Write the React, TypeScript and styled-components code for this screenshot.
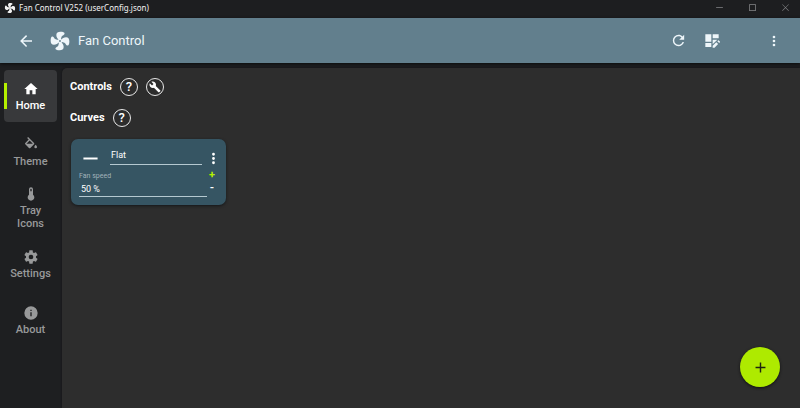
import React from "react";
import styled, { createGlobalStyle } from "styled-components";

const GlobalStyle = createGlobalStyle`
  * { box-sizing: border-box; }
  html, body { margin: 0; height: 100%; }
  #root { height: 100%; }
  body {
    background: #1e1f21;
    color: #fff;
    font-family: Roboto, "Liberation Sans", sans-serif;
    overflow: hidden;
  }
  button, input { font: inherit; color: inherit; }
`;

const paths = {
  home: "M10,20V14H14V20H19V12H22L12,3L2,12H5V20H10Z",
  fill: "M19,11.5C19,11.5 17,13.67 17,15A2,2 0 0,0 19,17A2,2 0 0,0 21,15C21,13.67 19,11.5 19,11.5M5.21,10L10,5.21L14.79,10M16.56,8.94L7.62,0L6.21,1.41L8.59,3.79L3.44,8.94C2.85,9.5 2.85,10.47 3.44,11.06L8.94,16.56C9.23,16.85 9.62,17 10,17C10.38,17 10.77,16.85 11.06,16.56L16.56,11.06C17.15,10.47 17.15,9.5 16.56,8.94Z",
  thermometer: "M15 13V5A3 3 0 0 0 9 5V13A5 5 0 1 0 15 13M12 4A1 1 0 0 1 13 5V8H11V5A1 1 0 0 1 12 4Z",
  cog: "M12,15.5A3.5,3.5 0 0,1 8.5,12A3.5,3.5 0 0,1 12,8.5A3.5,3.5 0 0,1 15.5,12A3.5,3.5 0 0,1 12,15.5M19.43,12.97C19.47,12.65 19.5,12.33 19.5,12C19.5,11.67 19.47,11.34 19.43,11L21.54,9.37C21.73,9.22 21.78,8.95 21.66,8.73L19.66,5.27C19.54,5.05 19.27,4.96 19.05,5.05L16.56,6.05C16.04,5.66 15.5,5.32 14.87,5.07L14.5,2.42C14.46,2.18 14.25,2 14,2H10C9.75,2 9.54,2.18 9.5,2.42L9.13,5.07C8.5,5.32 7.96,5.66 7.44,6.05L4.95,5.05C4.73,4.96 4.46,5.05 4.34,5.27L2.34,8.73C2.21,8.95 2.27,9.22 2.46,9.37L4.57,11C4.53,11.34 4.5,11.67 4.5,12C4.5,12.33 4.53,12.65 4.57,12.97L2.46,14.63C2.27,14.78 2.21,15.05 2.34,15.27L4.34,18.73C4.46,18.95 4.73,19.03 4.95,18.95L7.44,17.94C7.96,18.34 8.5,18.68 9.13,18.93L9.5,21.58C9.54,21.82 9.75,22 10,22H14C14.25,22 14.46,21.82 14.5,21.58L14.87,18.93C15.5,18.67 16.04,18.34 16.56,17.94L19.05,18.95C19.27,19.03 19.54,18.95 19.66,18.73L21.66,15.27C21.78,15.05 21.73,14.78 21.54,14.63L19.43,12.97Z",
  info: "M13,9H11V7H13M13,17H11V11H13M12,2A10,10 0 0,0 2,12A10,10 0 0,0 12,22A10,10 0 0,0 22,12A10,10 0 0,0 12,2Z",
  back: "M20,11V13H8L13.5,18.5L12.08,19.92L4.16,12L12.08,4.08L13.5,5.5L8,11H20Z",
  refresh: "M17.65,6.35C16.2,4.9 14.21,4 12,4A8,8 0 0,0 4,12A8,8 0 0,0 12,20C15.73,20 18.84,17.45 19.73,14H17.65C16.83,16.33 14.61,18 12,18A6,6 0 0,1 6,12A6,6 0 0,1 12,6C13.66,6 15.14,6.69 16.22,7.78L13,11H20V4L17.65,6.35Z",
  dashboardEdit: "M2,2H11V13H2ZM13,2H22V8H13ZM2,15H11V21H2ZM13,10H20L13,17ZM13,19.2V22H15.8L21.2,16.6L18.4,13.8ZM22.8,15L20,12.2L21,11.2Q21.6,10.8 22.2,11.2L23.8,12.8Q24.2,13.4 23.8,14Z",
  dots: "M12,16A2,2 0 0,1 14,18A2,2 0 0,1 12,20A2,2 0 0,1 10,18A2,2 0 0,1 12,16M12,10A2,2 0 0,1 14,12A2,2 0 0,1 12,14A2,2 0 0,1 10,12A2,2 0 0,1 12,10M12,4A2,2 0 0,1 14,6A2,2 0 0,1 12,8A2,2 0 0,1 10,6A2,2 0 0,1 12,4Z",
  wrench: "M22.7,19L13.6,9.9C14.5,7.6 14,4.9 12.1,3C10.1,1 7.1,0.6 4.7,1.7L9,6L6,9L1.6,4.7C0.4,7.1 0.9,10.1 2.9,12.1C4.8,14 7.5,14.5 9.8,13.6L18.9,22.7C19.3,23.1 19.9,23.1 20.3,22.7L22.6,20.4C23.1,20 23.1,19.3 22.7,19Z",
  plus: "M19,13H13V19H11V13H5V11H11V5H13V11H19V13Z",
  line: "M2,10.6H22V13.4H2Z",
  minimize: "M3,11H21V13H3Z",
  maximize: "M3,3H21V21H3ZM5,5V19H19V5Z",
  close: "M4,3L12,11L20,3L21,4L13,12L21,20L20,21L12,13L4,21L3,20L11,12L3,4Z",
};

type IconName = keyof typeof paths;

const Svg = styled.svg<{ $size: number }>`
  display: block;
  flex: none;
  width: ${(p) => p.$size}px;
  height: ${(p) => p.$size}px;
  fill: currentColor;
  fill-rule: evenodd;
`;

const Icon = ({ name, size }: { name: IconName; size: number }) => (
  <Svg viewBox="0 0 24 24" $size={size} aria-hidden="true">
    <path d={paths[name]} />
  </Svg>
);

const blade =
  "M11,10.6C9.2,9.6 8,7.8 8,5.4C8,3 9.8,1.8 12.4,1.8C15.2,1.8 17.2,2.3 17,4C16.8,5.4 14.6,5.6 13.8,7.2C13.3,8.2 13.4,9.6 13,10.6Z";

const FanLogo = ({ size }: { size: number }) => (
  <Svg viewBox="0 0 24 24" $size={size} aria-hidden="true">
    {[0, 90, 180, 270].map((angle) => (
      <path key={angle} d={blade} transform={`rotate(${angle} 12 12)`} />
    ))}
    <path d="M12,9.6A2.4,2.4 0 1,1 12,14.4A2.4,2.4 0 1,1 12,9.6M12,11A1,1 0 1,0 12,13A1,1 0 1,0 12,11Z" />
  </Svg>
);

const Window = styled.div`
  display: flex;
  flex-direction: column;
  height: 100%;
  min-height: 360px;
`;

const TitleBar = styled.header`
  display: flex;
  align-items: center;
  gap: 3px;
  height: 18px;
  padding: 0 2px 3px 4px;
  background: #1d1e20;
  color: #f2f2f2;
  font: 8px/14px "Noto Sans", sans-serif;
`;

const WindowButtons = styled.div`
  display: flex;
  gap: 8px;
  margin-left: auto;
`;

const WindowButton = styled.button`
  display: grid;
  place-items: center;
  width: 25px;
  height: 14px;
  padding: 0;
  border: 0;
  background: none;
  color: #858688;
`;

const AppBar = styled.div`
  display: flex;
  align-items: center;
  height: 45px;
  padding: 0 14px;
  background: #627f8d;
  color: #eef6fa;
  box-shadow: 0 1px 3px #0b0d0e;
  z-index: 1;
`;

const IconButton = styled.button`
  display: grid;
  place-items: center;
  width: 24px;
  height: 24px;
  padding: 0;
  border: 0;
  background: none;
`;

const Brand = styled.h1`
  display: flex;
  align-items: center;
  gap: 7px;
  margin: 0 auto 0 11px;
  font-size: 13px;
  font-weight: 400;
  line-height: 20px;
`;

const Actions = styled.div`
  display: flex;
  gap: 10px;
`;

const MenuSlot = styled.div`
  margin-left: 28px;
`;

const Body = styled.div`
  display: flex;
  flex: 1;
  min-height: 0;
`;

const Sidebar = styled.nav`
  display: flex;
  flex-direction: column;
  gap: 4px;
  width: 62px;
  padding: 7px 5px 7px 4px;
  flex: none;
`;

const NavLink = styled.a<{ $active?: boolean }>`
  position: relative;
  display: flex;
  flex-direction: column;
  align-items: center;
  justify-content: center;
  gap: 2px;
  min-height: 52px;
  border-radius: 4px;
  background: ${(p) => (p.$active ? "#38393b" : "none")};
  color: ${(p) => (p.$active ? "#fff" : "#98999a")};
  font-size: 11px;
  font-weight: 500;
  line-height: 13px;
  text-align: center;
  text-decoration: none;

  &::before {
    content: ${(p) => (p.$active ? '""' : "none")};
    position: absolute;
    left: 0;
    top: 13px;
    bottom: 13px;
    width: 3px;
    background: #b4f000;
  }
`;

const NavText = styled.span`
  max-width: 44px;
`;

const Main = styled.main`
  flex: 1;
  margin-top: 5px;
  padding: 9px 8px;
  background: #2d2d2d;
  border-top-left-radius: 5px;
  box-shadow: 0 0 2px #111214;
`;

const SectionHeader = styled.div`
  display: flex;
  align-items: center;
  gap: 8px;
  height: 19px;
  margin-bottom: 12px;
`;

const SectionTitle = styled.h2`
  margin: 0;
  font-size: 11px;
  font-weight: 700;
  line-height: 16px;
`;

const RoundButton = styled.button`
  display: grid;
  place-items: center;
  width: 18px;
  height: 18px;
  padding: 0;
  border: 1px solid #e8e8e8;
  border-radius: 50%;
  background: none;
  font-size: 13px;
  font-weight: 500;
  line-height: 16px;
`;

const Card = styled.section`
  display: flex;
  flex-direction: column;
  width: 155px;
  margin-left: 1px;
  padding: 9px 4px 8px 8px;
  border-radius: 7px;
  background: #365563;
  box-shadow: 0 1px 3px #151719;
`;

const CardHead = styled.div`
  display: flex;
  gap: 3px;
  height: 20px;
`;

const CurveIcon = styled.div`
  display: grid;
  place-items: center;
  flex: none;
  width: 23px;
  height: 20px;
  margin-right: 5px;
`;

const TextField = styled.input<{ $roomy?: boolean }>`
  display: block;
  min-width: 0;
  width: 100%;
  height: ${(p) => (p.$roomy ? 17 : 15)}px;
  padding: ${(p) => (p.$roomy ? "0 1px 2px" : "0 2px")};
  border: 0;
  border-bottom: 1px solid #b5c9d1;
  border-radius: 0;
  outline: 0;
  background: none;
  color: #fff;
  font-size: 9px;
  line-height: 14px;
`;

const CardMenu = styled.button`
  display: grid;
  place-items: center;
  flex: none;
  width: 17px;
  height: 20px;
  padding: 0;
  border: 0;
  background: none;
`;

const SpeedRow = styled.div`
  display: flex;
  padding-right: 5px;
`;

const SpeedField = styled.label`
  flex: 1;
  min-width: 0;
  padding-top: 2px;
  color: #a1b2ba;
  font-size: 7px;
  line-height: 12px;
`;

const Stepper = styled.div`
  display: flex;
  flex-direction: column;
  width: 10px;
`;

const StepButton = styled.button<{ $accent?: boolean }>`
  height: 13px;
  padding: 0;
  border: 0;
  background: none;
  color: ${(p) => (p.$accent ? "#b4f000" : "#fff")};
  font-size: 11px;
  font-weight: 700;
  line-height: 13px;
`;

const AddButton = styled.button`
  position: fixed;
  right: 20px;
  bottom: 21px;
  display: grid;
  place-items: center;
  width: 40px;
  height: 40px;
  padding: 0;
  border: 0;
  border-radius: 50%;
  background: #aeea00;
  color: #1f2510;
  box-shadow: 0 1px 3px #111;
`;

const navItems: { label: string; icon: IconName; active?: boolean }[] = [
  { label: "Home", icon: "home", active: true },
  { label: "Theme", icon: "fill" },
  { label: "Tray Icons", icon: "thermometer" },
  { label: "Settings", icon: "cog" },
  { label: "About", icon: "info" },
];

export default function App() {
  return (
    <Window>
      <GlobalStyle />
      <TitleBar>
        <FanLogo size={12} />
        <span>Fan Control V252 (userConfig.json)</span>
        <WindowButtons>
          <WindowButton aria-label="Minimize"><Icon name="minimize" size={9} /></WindowButton>
          <WindowButton aria-label="Maximize"><Icon name="maximize" size={9} /></WindowButton>
          <WindowButton aria-label="Close"><Icon name="close" size={9} /></WindowButton>
        </WindowButtons>
      </TitleBar>
      <AppBar>
        <IconButton aria-label="Back"><Icon name="back" size={18} /></IconButton>
        <Brand><FanLogo size={22} />Fan Control</Brand>
        <Actions>
          <IconButton aria-label="Refresh"><Icon name="refresh" size={17} /></IconButton>
          <IconButton aria-label="Edit dashboard"><Icon name="dashboardEdit" size={16} /></IconButton>
          <MenuSlot>
            <IconButton aria-label="Menu"><Icon name="dots" size={16} /></IconButton>
          </MenuSlot>
        </Actions>
      </AppBar>
      <Body>
        <Sidebar>
          {navItems.map((item) => (
            <NavLink key={item.label} href="#" $active={item.active} aria-current={item.active ? "page" : undefined}>
              <Icon name={item.icon} size={16} />
              <NavText>{item.label}</NavText>
            </NavLink>
          ))}
        </Sidebar>
        <Main>
          <SectionHeader>
            <SectionTitle>Controls</SectionTitle>
            <RoundButton aria-label="Controls help">?</RoundButton>
            <RoundButton aria-label="Controls setup"><Icon name="wrench" size={12} /></RoundButton>
          </SectionHeader>
          <SectionHeader>
            <SectionTitle>Curves</SectionTitle>
            <RoundButton aria-label="Curves help">?</RoundButton>
          </SectionHeader>
          <Card>
            <CardHead>
              <CurveIcon><Icon name="line" size={17} /></CurveIcon>
              <TextField $roomy aria-label="Curve name" defaultValue="Flat" />
              <CardMenu aria-label="Curve menu"><Icon name="dots" size={17} /></CardMenu>
            </CardHead>
            <SpeedRow>
              <SpeedField>
                Fan speed
                <TextField defaultValue="50 %" />
              </SpeedField>
              <Stepper>
                <StepButton $accent aria-label="Increase">+</StepButton>
                <StepButton aria-label="Decrease">-</StepButton>
              </Stepper>
            </SpeedRow>
          </Card>
        </Main>
      </Body>
      <AddButton aria-label="Add"><Icon name="plus" size={17} /></AddButton>
    </Window>
  );
}
